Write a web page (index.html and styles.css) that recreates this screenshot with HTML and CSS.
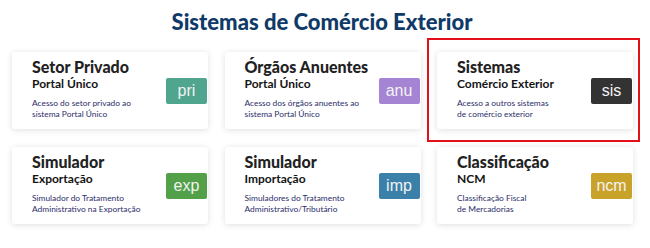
FILE: index.html
```html
<!DOCTYPE html>
<html lang="pt-BR">
<head>
<meta charset="utf-8">
<title>Sistemas de Comércio Exterior</title>
<link rel="stylesheet" href="styles.css">
</head>
<body>
<main class="page">
  <h1 class="heading">Sistemas de Comércio Exterior</h1>
  <div class="grid">
    <a class="card">
      <div class="text">
        <div class="title">Setor Privado</div>
        <div class="subtitle">Portal Único</div>
        <div class="desc">Acesso do setor privado ao<br>sistema Portal Único</div>
      </div>
      <span class="badge b-pri">pri</span>
    </a>
    <a class="card">
      <div class="text">
        <div class="title">Órgãos Anuentes</div>
        <div class="subtitle">Portal Único</div>
        <div class="desc">Acesso dos órgãos anuentes ao<br>sistema Portal Único</div>
      </div>
      <span class="badge b-anu">anu</span>
    </a>
    <a class="card selected">
      <div class="text">
        <div class="title">Sistemas</div>
        <div class="subtitle">Comércio Exterior</div>
        <div class="desc">Acesso a outros sistemas<br>de comércio exterior</div>
      </div>
      <span class="badge b-sis">sis</span>
      <span class="highlight"></span>
    </a>
    <a class="card">
      <div class="text">
        <div class="title">Simulador</div>
        <div class="subtitle">Exportação</div>
        <div class="desc">Simulador do Tratamento<br>Administrativo na Exportação</div>
      </div>
      <span class="badge b-exp">exp</span>
    </a>
    <a class="card">
      <div class="text">
        <div class="title">Simulador</div>
        <div class="subtitle">Importação</div>
        <div class="desc">Simuladores do Tratamento<br>Administrativo/Tributário</div>
      </div>
      <span class="badge b-imp">imp</span>
    </a>
    <a class="card">
      <div class="text">
        <div class="title">Classificação</div>
        <div class="subtitle">NCM</div>
        <div class="desc">Classificação Fiscal<br>de Mercadorias</div>
      </div>
      <span class="badge b-ncm">ncm</span>
    </a>
  </div>
</main>
</body>
</html>
```

FILE: styles.css
```css
html, body {
  margin: 0;
  padding: 0;
  background: #ffffff;
}
body {
  font-family: "Lato", "Open Sans", sans-serif;
  width: 650px;
  height: 248px;
  overflow: hidden;
}
.page {
  padding-top: 9px;
}
.heading {
  margin: 0;
  text-align: center;
  font-size: 22px;
  line-height: 26px;
  font-weight: 900;
  color: #0f3a68;
  padding-right: 6px;
}
.grid {
  display: grid;
  grid-template-columns: repeat(3, 196px);
  grid-auto-rows: 77px;
  column-gap: 16.5px;
  row-gap: 18px;
  padding-left: 12px;
  margin-top: 17px;
}
.card {
  position: relative;
  display: flex;
  align-items: center;
  justify-content: space-between;
  background: #fff;
  border-radius: 3px;
  box-shadow: 0 1px 6px rgba(0, 0, 0, 0.13);
  text-decoration: none;
}
.text {
  align-self: flex-start;
  padding: 5px 0 0 20px;
}
.title {
  font-size: 16px;
  line-height: 20px;
  font-weight: 900;
  color: #222222;
  white-space: nowrap;
}
.subtitle {
  font-size: 12px;
  line-height: 14px;
  font-weight: 700;
  color: #141414;
}
.desc {
  margin-top: 7px;
  font-size: 8.4px;
  line-height: 11px;
  color: #2c2e6a;
  white-space: nowrap;
}
.badge {
  width: 41px;
  height: 26px;
  margin-right: 1px;
  display: flex;
  align-items: center;
  justify-content: center;
  border-radius: 2px;
  font-family: "Liberation Sans", Arial, sans-serif;
  font-size: 16px;
  color: #f3f3f3;
  flex: none;
}
.b-pri { background: #4fa58e; }
.b-anu { background: #a484d3; }
.b-sis { background: #333333; }
.b-exp { background: #52a048; }
.b-imp { background: #3b80a8; }
.b-ncm { background: #c9a22a; }
.highlight {
  position: absolute;
  left: -10px;
  right: -7px;
  top: -14px;
  bottom: -13px;
  border: 2px solid #e3101c;
  pointer-events: none;
}
```
